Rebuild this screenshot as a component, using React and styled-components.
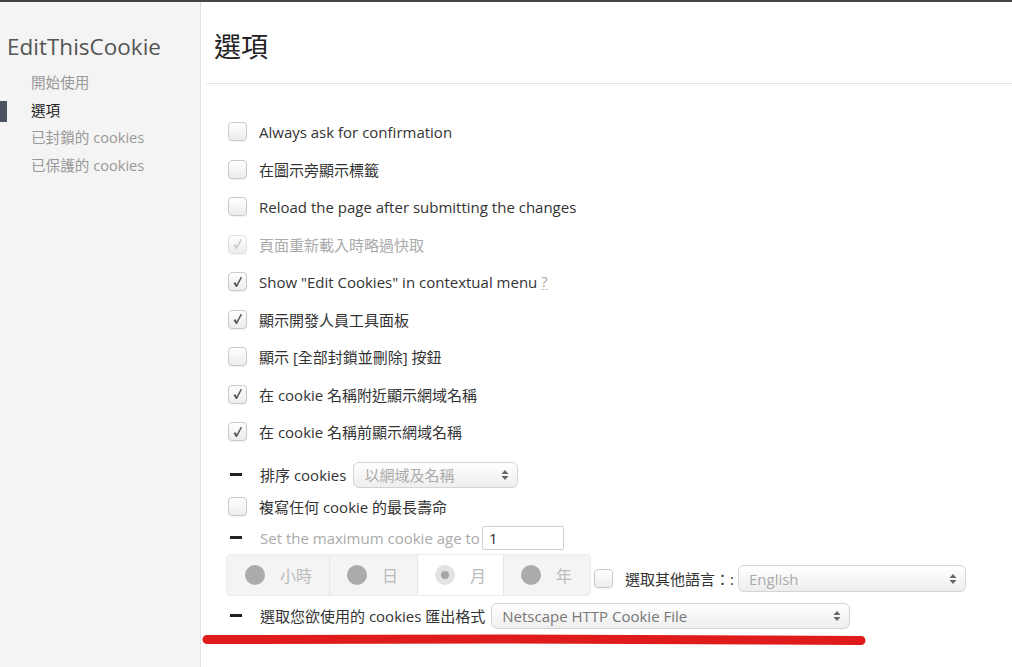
import React from 'react'
import styled, { createGlobalStyle } from 'styled-components'

const GlobalStyle = createGlobalStyle`
  html, body { margin: 0; padding: 0; background: #fff; }
  body {
    font-family: "Open Sans", "Noto Sans CJK TC", sans-serif;
    color: #333;
  }
  * { box-sizing: border-box; }
`

const Page = styled.div`
  position: relative;
  display: flex;
  height: 667px;
  border-top: 2px solid #454545;
  overflow: hidden;
`

const Sidebar = styled.aside`
  width: 201px;
  flex: none;
  background: #f4f4f4;
  border-right: 1px solid #e2e2e2;
  padding-top: 29px;
`

const Brand = styled.h1`
  margin: 0 0 0 7px;
  font-weight: 400;
  font-size: 22.5px;
  line-height: 32px;
  color: #555;
`

const NavList = styled.ul`
  list-style: none;
  margin: 6px 0 0;
  padding: 0;
`

const NavItem = styled.li`
  position: relative;
  height: 27.7px;
  line-height: 27.7px;
  padding-left: 31px;
  font-size: 14.6px;
  color: ${p => (p.$active ? '#222' : '#999')};
  &::before {
    content: '';
    display: ${p => (p.$active ? 'block' : 'none')};
    position: absolute;
    left: 0;
    top: 4px;
    width: 7px;
    height: 21px;
    background: #4b5360;
  }
`

const Main = styled.main`
  flex: 1;
  padding-left: 5px;
`

const Title = styled.h2`
  margin: 0;
  height: 82px;
  padding: 25px 0 0 8px;
  font-weight: 400;
  font-size: 27px;
  line-height: 40px;
  color: #222;
  border-bottom: 1px solid #e3e3e3;
`

const Options = styled.div`
  padding: 29px 0 0 22px;
`

const Row = styled.div`
  display: flex;
  align-items: center;
  height: ${p => p.$h}px;
  margin-top: ${p => p.$mt || 0}px;
  font-size: 15px;
  color: ${p => (p.$muted ? '#aaa' : '#333')};
`

const Box = styled.span`
  width: 19px;
  height: 19px;
  flex: none;
  margin: 0 12px 0 0;
  border: 1px solid ${p => (p.$disabled ? '#e2e2e2' : '#c9c9c9')};
  border-radius: 4px;
  background: linear-gradient(#fff, #ececec);
  box-shadow: 0 1px 1px rgba(0, 0, 0, 0.06);
  display: flex;
  align-items: center;
  justify-content: center;
  color: ${p => (p.$disabled ? '#c8c8c8' : '#555')};
`

const Tick = () => (
  <svg width="11" height="12" viewBox="0 0 11 12">
    <path d="M1.5 7 L3.6 6.2 L4.6 8.6 L8.8 0.8 L10 1.4 L5 11 L4 11 Z" fill="currentColor" />
  </svg>
)

const Dash = styled.span`
  width: 12px;
  height: 3px;
  flex: none;
  margin: 0 18px 0 2px;
  background: #222;
`

const Help = styled.span`
  margin-left: 4px;
  color: #aaa;
  border-bottom: 1px dotted #aaa;
  line-height: 16px;
`

const Select = styled.div`
  display: flex;
  align-items: center;
  justify-content: space-between;
  width: ${p => p.$w}px;
  height: ${p => p.$hgt || 26}px;
  margin-left: ${p => p.$ml || 6}px;
  padding: 0 8px 0 10px;
  border: 1px solid #d3d3d3;
  border-radius: 6px;
  background: linear-gradient(#fff, #eee);
  color: ${p => (p.$faded ? '#aaa' : '#777')};
  font-size: 15px;
`

const Arrows = () => (
  <svg width="8" height="12" viewBox="0 0 8 12">
    <path d="M4 1 L7.5 5 H0.5 Z M4 11 L7.5 7 H0.5 Z" fill="#666" />
  </svg>
)

const AgeInput = styled.span`
  width: 82px;
  height: 24px;
  margin-left: 2px;
  padding-left: 6px;
  border: 1px solid #cfcfcf;
  border-radius: 2px;
  line-height: 22px;
  color: #333;
  background: #fff;
`

const Segments = styled.div`
  display: flex;
  height: 42px;
  margin-left: -2px;
  border: 1px solid #ececec;
  border-radius: 4px;
  background: #f4f4f4;
`

const Segment = styled.div`
  display: flex;
  align-items: center;
  width: ${p => p.$w}px;
  padding-left: 17px;
  background: ${p => (p.$on ? '#fff' : 'transparent')};
  border-left: 1px solid ${p => (p.$first ? 'transparent' : '#e6e6e6')};
  font-size: 16px;
  color: #bbb;
`

const Radio = styled.span`
  width: 20px;
  height: 20px;
  margin-right: 15px;
  border-radius: 50%;
  background: ${p => (p.$on ? '#e2e2e2' : '#ababab')};
  display: flex;
  align-items: center;
  justify-content: center;
  &::after {
    content: '';
    display: ${p => (p.$on ? 'block' : 'none')};
    width: 8px;
    height: 8px;
    border-radius: 50%;
    background: #a6a6a6;
  }
`

const Lang = styled.div`
  display: flex;
  align-items: center;
  margin: 8px 0 0 3px;
`

const Underline = styled.svg`
  position: absolute;
  left: 198px;
  top: 628px;
  pointer-events: none;
`

const navItems = ['開始使用', '選項', '已封鎖的 cookies', '已保護的 cookies']

const checks = [
  { label: 'Always ask for confirmation' },
  { label: '在圖示旁顯示標籤' },
  { label: 'Reload the page after submitting the changes' },
  { label: '頁面重新載入時略過快取', checked: true, disabled: true },
  { label: 'Show "Edit Cookies" in contextual menu', checked: true, help: true },
  { label: '顯示開發人員工具面板', checked: true },
  { label: '顯示 [全部封鎖並刪除] 按鈕' },
  { label: '在 cookie 名稱附近顯示網域名稱', checked: true },
  { label: '在 cookie 名稱前顯示網域名稱', checked: true },
]

const units = [
  { label: '小時', w: 102 },
  { label: '日', w: 88 },
  { label: '月', w: 86, on: true },
  { label: '年', w: 87 },
]

export default function App() {
  return (
    <>
      <GlobalStyle />
      <Page>
        <Sidebar>
          <Brand>EditThisCookie</Brand>
          <NavList>
            {navItems.map(item => (
              <NavItem key={item} $active={item === '選項'}>{item}</NavItem>
            ))}
          </NavList>
        </Sidebar>
        <Main>
          <Title>選項</Title>
          <Options>
            {checks.map(c => (
              <Row key={c.label} $h={37.5} $muted={c.disabled}>
                <Box $disabled={c.disabled}>{c.checked && <Tick />}</Box>
                {c.label}
                {c.help && <Help>?</Help>}
              </Row>
            ))}
            <Row $h={32} $mt={8}>
              <Dash />
              排序 cookies
              <Select $w={165} $ml={7} $faded>
                以網域及名稱
                <Arrows />
              </Select>
            </Row>
            <Row $h={32}>
              <Box />
              複寫任何 cookie 的最長壽命
            </Row>
            <Row $h={30} $muted>
              <Dash />
              Set the maximum cookie age to
              <AgeInput>1</AgeInput>
            </Row>
            <Row $h={44}>
              <Segments>
                {units.map((u, i) => (
                  <Segment key={u.label} $w={u.w} $on={u.on} $first={i === 0}>
                    <Radio $on={u.on} />
                    {u.label}
                  </Segment>
                ))}
              </Segments>
              <Lang>
                <Box />
                選取其他語言：:
                <Select $w={228} $hgt={27} $ml={4} $faded>
                  English
                  <Arrows />
                </Select>
              </Lang>
            </Row>
            <Row $h={28} $mt={5}>
              <Dash />
              選取您欲使用的 cookies 匯出格式
              <Select $w={359} $ml={6}>
                Netscape HTTP Cookie File
                <Arrows />
              </Select>
            </Row>
          </Options>
        </Main>
        <Underline width="680" height="20" viewBox="0 0 680 20">
          <path d="M9 9.5 C200 8.5 500 9 663 10.5" stroke="#e01b1b" strokeWidth="9" strokeLinecap="round" fill="none" />
        </Underline>
      </Page>
    </>
  )
}
